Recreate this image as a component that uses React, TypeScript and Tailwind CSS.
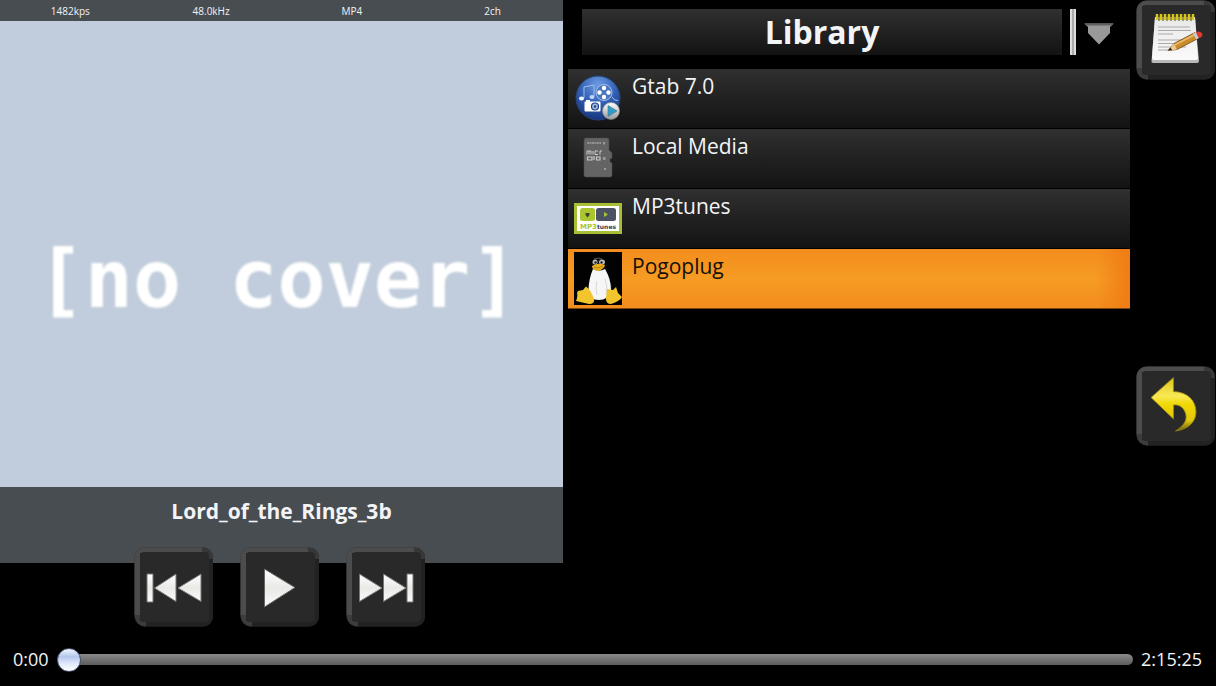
import { useState } from 'react';
import type { ReactNode } from 'react';

const streamInfo = ['1482kps', '48.0kHz', 'MP4', '2ch'];

function KeyButton({ label, children }: { label: string; children: ReactNode }) {
  return (
    <button type="button" aria-label={label} className="block h-20 w-20 shrink-0">
      <svg viewBox="0 0 80 80" className="h-full w-full">
        <defs>
          <linearGradient id="keyGlyph" x1="0" y1="0" x2="0" y2="1">
            <stop offset="0" stopColor="#ffffff" />
            <stop offset="0.5" stopColor="#e9e9e6" />
            <stop offset="1" stopColor="#fbfbfa" />
          </linearGradient>
        </defs>
        <rect x="0.5" y="0.5" width="78.500" height="79" rx="10" fill="#242424" />
        <path d="M0.5 68V11C0.5 5 5 0.5 11 0.5H68V6H6V68Z" fill="#4c4c4c" />
        <path d="M68 0.5C75 1 79 5 79 12H74V6H68Z" fill="#383838" />
        <path d="M0.5 68H6V74H12V79.5C5 79 1 75 0.5 68Z" fill="#3c3c3c" />
        <path d="M74 12H79V69C79 75 75 79.5 69 79.5H12V75H69Q74 75 74 69Z" fill="#222222" />
        <rect x="6" y="5" width="69" height="70" rx="4" fill="#292929" />
        {children}
      </svg>
    </button>
  );
}

function PreviousGlyph() {
  return (
    <g fill="url(#keyGlyph)" stroke="#777" strokeWidth="1">
      <path d="M13 27H19V55H13Z" />
      <path d="M42 27V54.500L20.500 41Z" />
      <path d="M67 27V54.500L44 41Z" />
    </g>
  );
}

function PlayGlyph() {
  return <path d="M24.500 22L55 40.500L24.500 60Z" fill="url(#keyGlyph)" stroke="#666" strokeWidth="1" />;
}

function NextGlyph() {
  return (
    <g fill="url(#keyGlyph)" stroke="#777" strokeWidth="1">
      <path d="M13.500 27V54.500L36 41Z" />
      <path d="M37.500 27V54.500L60 41Z" />
      <path d="M61 27H67V55H61Z" />
    </g>
  );
}

function NotesGlyph() {
  return (
    <>
      <defs>
        <linearGradient id="paper" x1="0" y1="0" x2="0" y2="1">
          <stop offset="0" stopColor="#e8e8e8" />
          <stop offset="1" stopColor="#fafafa" />
        </linearGradient>
      </defs>
      <path d="M19 18H59L63 61Q63 63 61 63H17Q15 63 15.500 61Z" fill="#b9b9b9" />
      <path d="M19 17H59L62 58Q62 60 60 60H18Q16 60 16 58Z" fill="url(#paper)" />
      <path d="M22 27H54M22 30.500H55M22 34H37M22 40H54M22 43.500H46M22 47H50M22 50H36" stroke="#a9a9a9" strokeWidth="1.200" />
      <path d="M21 14V20M25 14V20M29 14V20M33 14V20M37 14V20M41 14V20M45 14V20M49 14V20M53 14V20M57 14V20" stroke="#d8c51c" strokeWidth="2.500" />
      <path d="M23 16V21M27 16V21M31 16V21M35 16V21M39 16V21M43 16V21M47 16V21M51 16V21M55 16V21" stroke="#69600f" strokeWidth="1.200" />
      <path d="M32 50.500L38 43.500L59 32.500L62 38.500L41 49.500Z" fill="#c98b2b" stroke="#6f4713" strokeWidth="0.800" />
      <path d="M38.500 45L60 34" stroke="#eec06a" strokeWidth="1.500" />
      <path d="M32 50.500L38 43.500L41 49.500Z" fill="#ecc98d" />
      <path d="M32 50.500L34.500 47.500L36 50Z" fill="#2b2119" />
      <path d="M57 33.500L60 32L63 38L60 39.500Z" fill="#c7c7c7" />
      <path d="M60 32Q64 30.500 66 33.500Q67.500 37 63 38Z" fill="#e3392c" />
    </>
  );
}

function BackGlyph() {
  return (
    <>
      <defs>
        <linearGradient id="backArrow" x1="0" y1="0" x2="0" y2="1">
          <stop offset="0" stopColor="#dcc21a" />
          <stop offset="0.350" stopColor="#f8e955" />
          <stop offset="0.500" stopColor="#f0d805" />
          <stop offset="0.800" stopColor="#e3c80c" />
          <stop offset="1" stopColor="#6b5d12" />
        </linearGradient>
      </defs>
      <path
        d="M15 31.500L37.500 11.500V25.500C52 26 60 35 60 46C60 56 52 63.500 39.500 65C49 59 52 53 49 46C47 41 43 38.500 37.500 39V53Z"
        fill="url(#backArrow)"
        stroke="#9a8510"
        strokeWidth="0.800"
      />
    </>
  );
}

function MediaServerIcon() {
  return (
    <svg viewBox="0 0 48 48" className="h-12 w-12">
      <defs>
        <radialGradient id="globe" cx="0.500" cy="0.200" r="0.800">
          <stop offset="0" stopColor="#6c9be2" />
          <stop offset="0.500" stopColor="#3563b7" />
          <stop offset="1" stopColor="#16357c" />
        </radialGradient>
        <linearGradient id="badge" x1="0" y1="0" x2="0" y2="1">
          <stop offset="0" stopColor="#fff" />
          <stop offset="1" stopColor="#999" />
        </linearGradient>
      </defs>
      <circle cx="24" cy="24" r="22" fill="url(#globe)" stroke="#27457f" />
      <path d="M10 24V13L20 11V22" fill="none" stroke="#9dbcec" strokeWidth="1" />
      <ellipse cx="7.500" cy="24.500" rx="2.500" ry="2" fill="#f3f7ff" />
      <ellipse cx="18" cy="23" rx="2.500" ry="2" fill="#c5d7f5" />
      <path d="M38 23Q40 27 44 26.500" fill="none" stroke="#a7c2ef" strokeWidth="1" />
      <circle cx="30" cy="18.500" r="8" fill="#4976bf" stroke="#a7c3ee" />
      <g fill="#fff">
        <circle cx="30" cy="14" r="2.200" />
        <circle cx="34.500" cy="18.500" r="2.200" />
        <circle cx="30" cy="23" r="2.200" />
        <circle cx="25.500" cy="18.500" r="2.200" />
        <rect x="10.500" y="27.500" width="16" height="10" rx="1" />
        <rect x="12" y="26" width="4" height="2" />
      </g>
      <circle cx="21" cy="32.500" r="3.500" fill="#9eb8e2" stroke="#203f83" strokeWidth="1.200" />
      <circle cx="21" cy="32.500" r="1.200" fill="#203f83" />
      <circle cx="37" cy="37" r="8.500" fill="url(#badge)" stroke="#8a8a8a" strokeWidth="0.600" />
      <path d="M34 31.500L43 37L34 42.500Z" fill="#2c9dcc" stroke="#4b6f80" strokeWidth="0.600" />
    </svg>
  );
}

function SdCardIcon() {
  return (
    <svg viewBox="0 0 48 48" className="h-12 w-12">
      <path d="M11 4H33Q35 4 35 6V16L38 19V24L36 25V28L38 29V41Q38 43 36 43H12Q10 43 10 41V6Q10 4 12 4Z" fill="#646464" stroke="#4b4b4b" strokeWidth="0.600" />
      <path d="M13 9H27M30 8V11" stroke="#bdbdbd" strokeWidth="1.200" strokeDasharray="2 0.500" />
      <path d="M13 20.500V17H17V20.500M15 17V20.500M19 17V20.500M24 17H21V20.500H24M26 20.500V17H28" fill="none" stroke="#c8c8c8" strokeWidth="1" />
      <path d="M13.500 23H18V26H13.500ZM20 22V26M22.500 23H26V26H22.500Z" fill="none" stroke="#c8c8c8" strokeWidth="1.200" />
      <path d="M29 23H31.500V26H29ZM30 34H32V36H30Z" fill="#999" />
    </svg>
  );
}

function Mp3TunesIcon() {
  return (
    <svg viewBox="0 0 48 48" className="h-12 w-12">
      <rect x="1.500" y="10.500" width="45" height="28" fill="#fff" stroke="#a6bf35" strokeWidth="3" />
      <rect x="6" y="14" width="15" height="13" rx="2.500" fill="#a9c52f" />
      <rect x="22" y="14" width="20" height="13" rx="2.500" fill="#4b5263" />
      <path d="M11.500 19H15.500V21L13.500 23.500L11.500 21Z" fill="#3e452d" />
      <path d="M30 18L34 20.500L30 23Z" fill="#a9c52f" />
      <text x="6" y="35" fontFamily="'DejaVu Sans', sans-serif" fontSize="7" fontWeight="700" fill="#3d4454">
        <tspan fill="#a9c52f">MP3</tspan>
        <tspan fontSize="6">tunes</tspan>
      </text>
    </svg>
  );
}

function PenguinIcon() {
  return (
    <svg viewBox="0 0 48 53" className="h-[53px] w-12">
      <rect width="48" height="53" fill="#020202" />
      <path d="M18 12Q18 6 24 6Q31 6 31 13L33 21Q38 28 38 39L34 47H17L13 38Q14 28 18 22Z" fill="#101010" />
      <path d="M20 7Q24 5 28 7" stroke="#555" strokeWidth="1" fill="none" />
      <path d="M19 17Q25 20 31 17Q37 27 37 38Q34 48 25 48Q15 48 14.500 38Q15 26 19 17Z" fill="#f6f6f6" />
      <path d="M23 29Q21 37 23 43M31 27Q34 34 32 43" stroke="#d8d8dc" strokeWidth="1" fill="none" />
      <ellipse cx="21" cy="10" rx="2.500" ry="2.500" fill="#bbb" />
      <ellipse cx="28" cy="10" rx="3" ry="2.500" fill="#bbb" />
      <circle cx="21.500" cy="10.500" r="1.200" fill="#222" />
      <circle cx="27.500" cy="10.500" r="1.200" fill="#222" />
      <path d="M18 14Q24 10 31 13Q30 17 24 19Q18 18 18 14Z" fill="#e9ae1d" />
      <path d="M20 15.500Q25 17 29 14" stroke="#ab7010" strokeWidth="0.800" fill="none" />
      <path d="M4 39L9 38L12 34.500Q17 38 20 47Q21 52 15 52L2 49Q4 44 3 41Z" fill="#f1c52b" />
      <path d="M33 37L39 38L42 35L44 41L48 45Q46 49 37 52Q32 52 32 47Z" fill="#f1c52b" />
    </svg>
  );
}

const sources = [
  { name: 'Gtab 7.0', icon: <MediaServerIcon /> },
  { name: 'Local Media', icon: <SdCardIcon /> },
  { name: 'MP3tunes', icon: <Mp3TunesIcon /> },
  { name: 'Pogoplug', icon: <PenguinIcon /> },
];

function NowPlaying() {
  return (
    <section className="flex aspect-square flex-col bg-[#484d51]">
      <div className="grid h-[21px] grid-cols-4 items-center pt-px text-center text-[10px] leading-[20px] text-gray-100">
        {streamInfo.map((info) => (
          <span key={info}>{info}</span>
        ))}
      </div>
      <div className="flex flex-1 items-center justify-center bg-[#c1cddc] pt-[52px] pr-2">
        <span className="font-['DejaVu_Sans_Mono',monospace] text-[80px] leading-none font-bold whitespace-nowrap text-white blur-[1px]">
          [no cover]
        </span>
      </div>
      <h2 className="h-[76px] pt-[10px] text-center text-[21px] leading-[28px] font-bold text-gray-100">
        Lord_of_the_Rings_3b
      </h2>
    </section>
  );
}

export default function App() {
  const [selected, setSelected] = useState('Pogoplug');
  const [position, setPosition] = useState(0);

  return (
    <main className="min-h-screen bg-black font-['Open_Sans','Noto_Sans',sans-serif] text-gray-100">
      <div className="flex items-start">
        <div className="w-[46.3%] shrink-0">
          <NowPlaying />
          {/* Transport keys overlap the bottom of the cover panel */}
          <div className="relative -mt-4 flex justify-center gap-[26px] pr-1">
            <KeyButton label="Previous">
              <PreviousGlyph />
            </KeyButton>
            <KeyButton label="Play">
              <PlayGlyph />
            </KeyButton>
            <KeyButton label="Next">
              <NextGlyph />
            </KeyButton>
          </div>
        </div>

        <section className="mr-[6px] ml-[5px] min-w-0 flex-1 pt-[9px]">
          <header className="mb-[14px] flex h-[46px] items-center gap-2 pr-4 pl-[14px]">
            <h1 className="flex h-full flex-1 items-center justify-center bg-linear-to-b from-[#303030] to-[#131313] text-[32px] leading-[44px] font-bold">
              Library
            </h1>
            <div className="h-full w-[6px] border-x-2 border-[#dcdcdc] bg-[#aaa]" />
            <button type="button" aria-label="Show menu" className="pt-1">
              <svg viewBox="0 0 30 22" className="h-[22px] w-[30px]">
                <path d="M0.500 0.500H29.500L26 4V10L15 21.500L4 10V4Z" fill="#999" />
                <path d="M0.500 0.500H29.500L28 2.500H2Z" fill="#606060" />
              </svg>
            </button>
          </header>

          <ul>
            {sources.map((source) => (
              <li key={source.name}>
                <button
                  type="button"
                  aria-pressed={selected === source.name}
                  onClick={() => setSelected(source.name)}
                  className={`flex h-[60px] w-full items-center gap-[10px] border-b px-[6px] pb-px text-left ${
                    selected === source.name
                      ? 'border-[#7a4510] bg-[linear-gradient(to_right,transparent_94%,#f07c14),linear-gradient(#f38d1d,#f69b23_50%,#f38d1d)] text-[#141008]'
                      : 'border-black bg-linear-to-b from-[#303030] to-[#131313] text-gray-100'
                  }`}
                >
                  {source.icon}
                  <span className="self-start pt-[3px] text-[21px] leading-[28px]">{source.name}</span>
                </button>
              </li>
            ))}
          </ul>
        </section>

        <nav className="w-20 shrink-0">
          <KeyButton label="Playlist">
            <NotesGlyph />
          </KeyButton>
          <div className="mt-[286px]">
            <KeyButton label="Back">
              <BackGlyph />
            </KeyButton>
          </div>
        </nav>
      </div>

      <div className="flex items-center gap-2 pt-5 pr-[14px] pl-[13px] text-[18px] leading-[24px]">
        <label htmlFor="seek" className="w-9">
          0:00
        </label>
        <input
          id="seek"
          type="range"
          min={0}
          max={8125}
          value={position}
          onChange={(e) => setPosition(Number(e.target.value))}
          className="h-6 min-w-0 flex-1 appearance-none bg-transparent [&::-webkit-slider-runnable-track]:h-[11px] [&::-webkit-slider-runnable-track]:rounded-full [&::-webkit-slider-runnable-track]:bg-linear-to-b [&::-webkit-slider-runnable-track]:from-[#8b8b8b] [&::-webkit-slider-runnable-track]:to-[#5c5c5c] [&::-webkit-slider-thumb]:-mt-[6px] [&::-webkit-slider-thumb]:h-6 [&::-webkit-slider-thumb]:w-6 [&::-webkit-slider-thumb]:appearance-none [&::-webkit-slider-thumb]:rounded-full [&::-webkit-slider-thumb]:border [&::-webkit-slider-thumb]:border-[#45526b] [&::-webkit-slider-thumb]:bg-[linear-gradient(#f4f7ff,#b3c6ec_35%,#dfe8fa_65%,#ffffff)]"
        />
        <span>2:15:25</span>
      </div>
    </main>
  );
}
